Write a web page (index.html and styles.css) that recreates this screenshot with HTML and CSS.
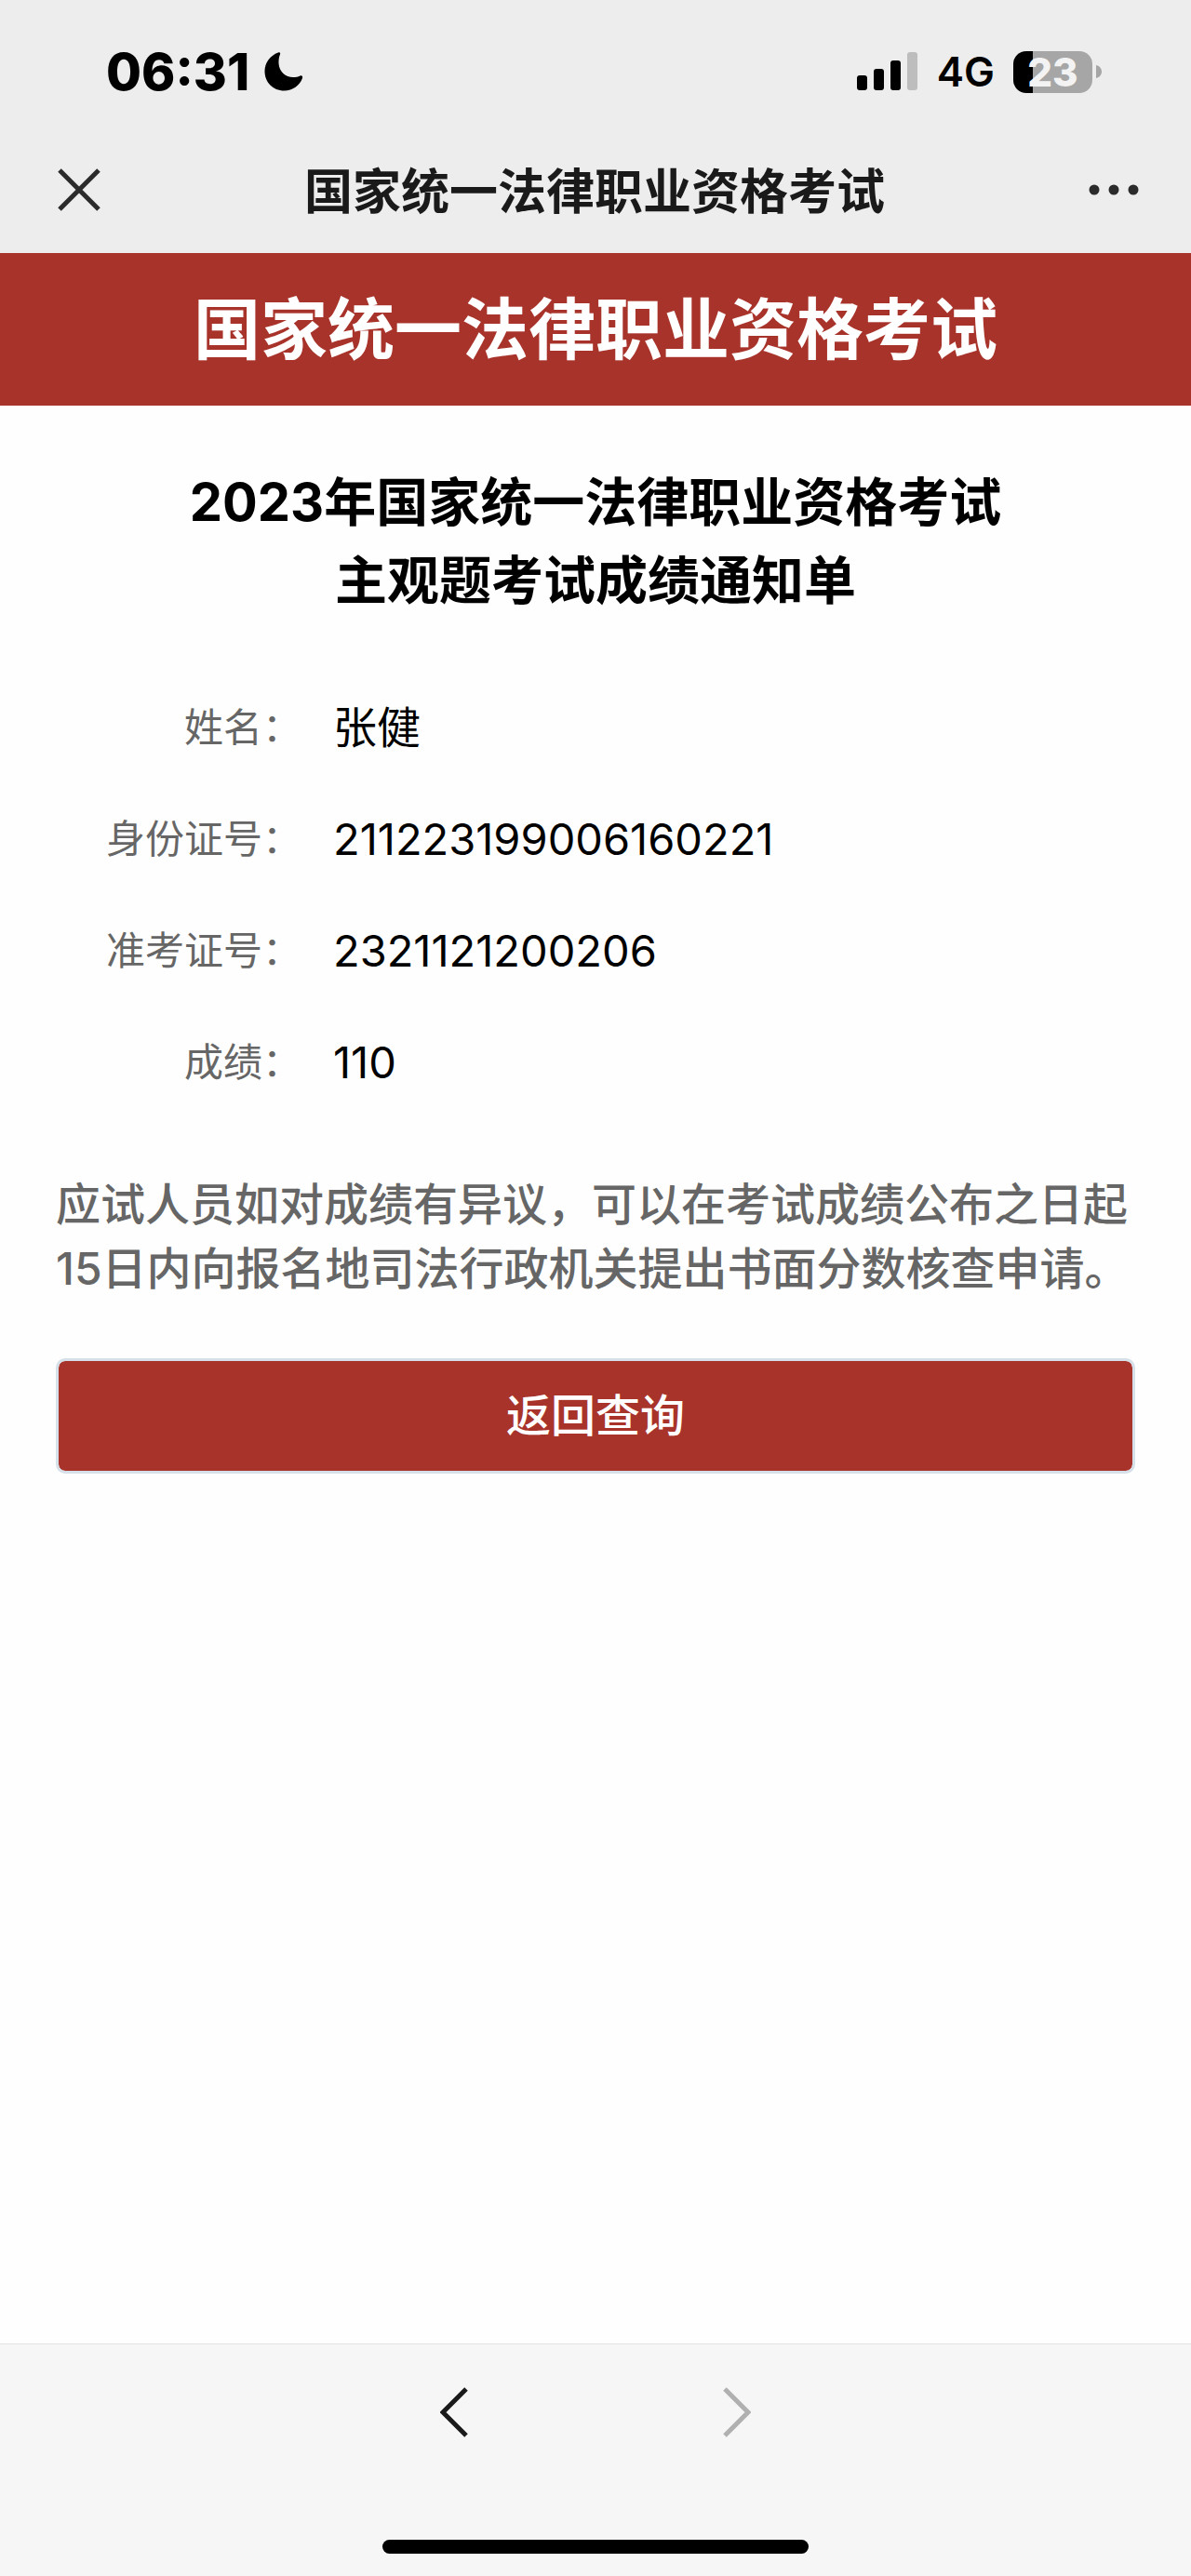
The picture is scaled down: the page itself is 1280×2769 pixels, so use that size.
FILE: index.html
```html
<!DOCTYPE html>
<html lang="zh-CN">
<head>
  <meta charset="utf-8">
  <meta name="viewport" content="width=device-width, initial-scale=1">
  <title>国家统一法律职业资格考试</title>
  <link rel="stylesheet" href="styles.css">
</head>
<body>
  <header class="topbar">
    <div class="status">
      <div class="status-left">
        <span class="time">06:31</span>
        <svg class="moon" width="42" height="42" viewBox="0 0 42 42">
          <path d="M15 0.5C17 0 17.500 1 17 2.500C15.500 6 15.500 9 15.500 12C16 21 23 27 31 27C34 27 36.500 26.500 38.500 25.500C40.500 25 41.500 26 41 28C38 36 30.500 41.500 21.500 41.500C9.500 41.500 0.500 32.500 0.500 20.500C0.500 11.500 6.500 3.500 15 0.500Z"/>
        </svg>
      </div>
      <div class="status-right">
        <svg class="signal" width="66" height="42" viewBox="0 0 66 42">
          <rect x="0" y="25" width="11" height="16" rx="3"/>
          <rect x="18" y="18" width="11" height="23" rx="3"/>
          <rect x="36" y="9" width="11" height="32" rx="3"/>
          <rect x="54" y="0" width="11" height="41" rx="3" fill="#bdbdbd"/>
        </svg>
        <span class="network">4G</span>
        <div class="battery"><span class="level">23</span></div>
        <svg class="battery-cap" width="6" height="14" viewBox="0 0 6 14">
          <path d="M0 0C8 2 8 12 0 14Z" fill="#a6a6a6"/>
        </svg>
      </div>
    </div>
    <div class="nav">
      <button class="icon-btn" type="button" aria-label="关闭">
        <svg width="46" height="46" viewBox="0 0 46 46">
          <path d="M2 2L44 44M44 2L2 44" fill="none" stroke="#2b2b2b" stroke-width="5"/>
        </svg>
      </button>
      <div class="nav-title">国家统一法律职业资格考试</div>
      <button class="icon-btn" type="button" aria-label="更多">
        <svg width="54" height="14" viewBox="0 0 54 14">
          <circle cx="6" cy="7" r="5.500" fill="#2b2b2b"/>
          <circle cx="27" cy="7" r="5.500" fill="#2b2b2b"/>
          <circle cx="48" cy="7" r="5.500" fill="#2b2b2b"/>
        </svg>
      </button>
    </div>
  </header>
  <h1 class="banner">国家统一法律职业资格考试</h1>
  <main class="content">
    <h2 class="title">2023年国家统一法律职业资格考试<br>主观题考试成绩通知单</h2>
    <dl class="result">
      <dt>姓名：</dt>
      <dd>张健</dd>
      <dt>身份证号：</dt>
      <dd>211223199006160221</dd>
      <dt>准考证号：</dt>
      <dd>2321121200206</dd>
      <dt>成绩：</dt>
      <dd>110</dd>
    </dl>
    <p class="note">应试人员如对成绩有异议，可以在考试成绩公布之日起15日内向报名地司法行政机关提出书面分数核查申请。</p>
    <button class="back" type="button">返回查询</button>
  </main>
  <footer class="toolbar">
    <div class="history">
      <button class="icon-btn" type="button" aria-label="后退">
        <svg width="30" height="54" viewBox="0 0 30 54">
          <path d="M28 2L3 27L28 52" fill="none" stroke="#1a1a1a" stroke-width="5"/>
        </svg>
      </button>
      <button class="icon-btn" type="button" aria-label="前进" disabled>
        <svg width="30" height="54" viewBox="0 0 30 54">
          <path d="M2 2L27 27L2 52" fill="none" stroke="#b0b0b0" stroke-width="5"/>
        </svg>
      </button>
    </div>
    <div class="home-bar"></div>
  </footer>
</body>
</html>
```
FILE: styles.css
```css
* {
  box-sizing: border-box;
}
body {
  margin: 0;
  min-height: 100vh;
  display: flex;
  flex-direction: column;
  background-color: #fefefe;
  color: #000;
  font-family: Inter, "Noto Sans CJK SC", sans-serif;
}
button {
  font-family: inherit;
  border: none;
}
svg {
  display: block;
}
.topbar {
  background-color: #ededed;
}
.status {
  height: 140px;
  padding: 14px 96px 0 114px;
  display: flex;
  justify-content: space-between;
  align-items: center;
}
.status-left, .status-right {
  display: flex;
  align-items: center;
}
.time {
  font-size: 55px;
  font-weight: 800;
}
.moon {
  margin-left: 16px;
}
.network {
  margin: 0 20px;
  font-size: 44px;
  font-weight: 600;
}
.battery {
  width: 85px;
  height: 45px;
  margin-right: 4px;
  border-radius: 14px;
  background: linear-gradient(to right, #000 21px, #a6a6a6 21px);
  display: flex;
  align-items: center;
  justify-content: center;
}
.level {
  color: #f3f3f3;
  font-size: 42px;
  font-weight: 800;
}
.nav {
  height: 132px;
  padding: 0 56px 4px 62px;
  display: flex;
  justify-content: space-between;
  align-items: center;
}
.nav-title {
  padding-bottom: 4px;
  color: #1a1a1a;
  font-size: 52px;
  font-weight: 700;
}
.icon-btn {
  padding: 0;
  background: none;
}
.banner {
  margin: 0;
  padding: 30px 0;
  background-color: #a8332a;
  color: #fff;
  font-size: 72px;
  font-weight: 700;
  line-height: 104px;
  text-align: center;
}
.content {
  flex: 1;
  padding: 62px 60px 0;
}
.title {
  margin: 0;
  font-size: 56px;
  font-weight: 700;
  line-height: 84px;
  text-align: center;
}
.result {
  margin: 56px 0 0;
  display: grid;
  grid-template-columns: 264px 1fr;
  column-gap: 34px;
  line-height: 120px;
}
.result dt {
  color: #666;
  font-size: 42px;
  text-align: right;
}
.result dd {
  margin: 0;
  font-size: 47px;
}
.note {
  margin: 58px 0 0;
  color: #666;
  font-size: 48px;
  font-weight: 500;
  line-height: 69px;
}
.back {
  display: block;
  width: 100%;
  height: 124px;
  margin-top: 62px;
  padding: 0 0 8px;
  border: 3px solid #d5e0e8;
  border-radius: 10px;
  background-color: #a8332a;
  background-clip: padding-box;
  color: #fff;
  font-size: 48px;
  font-weight: 500;
}
.toolbar {
  height: 250px;
  padding: 46px 0 24px;
  border-top: 1px solid #e2e2e2;
  background-color: #f6f6f6;
  display: flex;
  flex-direction: column;
  justify-content: space-between;
  align-items: center;
}
.history {
  display: flex;
  gap: 274px;
}
.home-bar {
  width: 458px;
  height: 15px;
  border-radius: 8px;
  background-color: #000;
}
```
